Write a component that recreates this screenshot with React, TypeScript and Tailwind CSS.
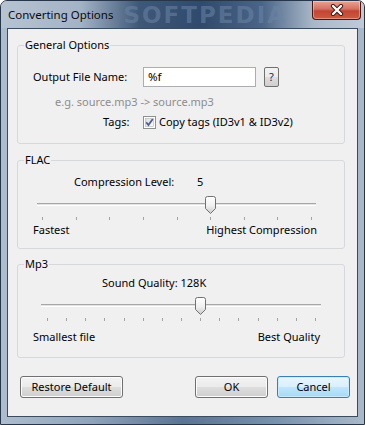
import React from 'react';

const btn =
  "h-[22px] w-[73px] rounded-[3px] border border-[#707070] bg-[linear-gradient(#f2f2f2_0%,#ebebeb_48%,#dddddd_52%,#cfcfcf_100%)] text-[11px] text-black shadow-[inset_0_0_0_1px_#fcfcfc]";

function Slider({ width, ticks, value, padL, padR, className }: { width: number; ticks: number; value: number; padL: number; padR: number; className: string }) {
  const step = (width - padL - padR - 1) / (ticks - 1);
  const left = padL + value * step - 5;
  return (
    <div className={className} style={{ width }}>
      <div className="relative h-[18px] flex items-center">
        <div className="w-full h-[3px] border-t border-[#a7a7a7] border-b border-b-white bg-[#e3e3e3] mt-[-2px]" />
        <svg className="absolute top-0" style={{ left }} width="11" height="18" viewBox="0 0 11 18">
          <defs>
            <linearGradient id={`th${ticks}`} x1="0" y1="0" x2="0" y2="1">
              <stop offset="0" stopColor="#ffffff" />
              <stop offset="0.55" stopColor="#f0f0f0" />
              <stop offset="1" stopColor="#c9c9c9" />
            </linearGradient>
          </defs>
          <path d="M0.5 2.5 Q0.5 0.5 2.5 0.5 H8.5 Q10.5 0.5 10.5 2.5 V12.5 L5.5 17.5 L0.5 12.5 Z" fill={`url(#th${ticks})`} stroke="#707070" />
        </svg>
      </div>
      <div className="flex justify-between mt-[3px]" style={{ paddingLeft: padL, paddingRight: padR }}>
        {Array.from({ length: ticks }).map((_, i) => (
          <div key={i} className="w-px h-[3px] bg-[#a3a3a3]" />
        ))}
      </div>
    </div>
  );
}

export default function App() {
  return (
    <div className="w-[365px] h-[425px] font-['Noto_Sans',sans-serif] text-black">
      <div className="w-full h-full flex flex-col rounded-t-[7px] border border-[#27364a] bg-[linear-gradient(90deg,#aebdcd_0%,#8fa3ba_25%,#5c7493_50%,#7790ab_75%,#aab9ca_100%)] overflow-hidden">
        {/* title bar */}
        <div className="h-[27px] flex items-start bg-[linear-gradient(90deg,#b6c3d1_0%,#a3b3c6_22%,#3e5878_38%,#2f4a6d_55%,#4a6587_72%,#a9b8c9_86%,#bfcad7_100%)]">
          <span className="shrink-0 whitespace-nowrap ml-[7px] mt-[7px] text-[11.5px] leading-[14px] text-[#0b0b0b]">Converting Options</span>
          <span className="shrink-0 whitespace-nowrap ml-[10px] mt-[1px] text-[23px] leading-[26px] font-bold tracking-[2px] text-[#6d86a6]/55 font-['DejaVu_Sans',sans-serif]">SOFTPEDIA</span>
          <div className="shrink-0 ml-auto mr-[3px] w-[49px] h-[19px] rounded-b-[4px] border border-t-0 border-[#4a1712] bg-[linear-gradient(#e9a493_0%,#d47062_45%,#c24534_55%,#cf5a3e_100%)] flex items-center justify-center shadow-[inset_0_0_0_1px_rgba(255,255,255,0.35)]">
            <svg width="14" height="12" viewBox="0 0 14 12">
              <path d="M3 2 L11 10 M11 2 L3 10" stroke="#3a1410" strokeWidth="4.2" strokeLinecap="round" />
              <path d="M3 2 L11 10 M11 2 L3 10" stroke="#ffffff" strokeWidth="2.4" strokeLinecap="round" />
            </svg>
          </div>
        </div>

        {/* client area */}
        <div className="mx-[6px] mb-[7px] flex-1 border border-[#3c4c60] bg-[#f0f0f0] flex flex-col text-[11px]">
          {/* General Options */}
          <fieldset className="ml-[9px] mt-[9px] w-[328px] h-[106px] border border-[#d5d9dd] rounded-[3px]">
            <legend className="ml-[6px] px-[1px] leading-[14px]">General Options</legend>
            <div className="mt-[15px] pl-[15px] flex items-center">
              <span className="w-[110px]">Output File Name:</span>
              <div className="w-[113px] h-[20px] border border-[#abadb3] bg-white pl-[4px] flex items-center text-[11.5px]">%f</div>
              <div className="ml-[8px] w-[15px] h-[20px] rounded-[2px] border border-[#707070] bg-[linear-gradient(#f2f2f2_0%,#ebebeb_48%,#dddddd_52%,#cfcfcf_100%)] flex items-center justify-center text-[#13245a]">?</div>
            </div>
            <div className="mt-[8px] pl-[37px] leading-[14px] text-[#8d8d8d]">e.g. source.mp3 -&gt; source.mp3</div>
            <div className="mt-[6px] pl-[85px] flex items-center leading-[14px]">
              <span className="w-[40px]">Tags:</span>
              <svg width="13" height="13" viewBox="0 0 13 13">
                <defs>
                  <linearGradient id="cb" x1="0" y1="0" x2="1" y2="1">
                    <stop offset="0" stopColor="#dcdcdc" />
                    <stop offset="1" stopColor="#fbfbfb" />
                  </linearGradient>
                </defs>
                <rect x="0.5" y="0.5" width="12" height="12" fill="#fff" stroke="#8e8f8f" />
                <rect x="2.5" y="2.5" width="8" height="8" fill="url(#cb)" stroke="#b4b4b4" strokeWidth="0.6" />
                <path d="M3.2 6.3 L5.4 9 L9.8 3" fill="none" stroke="#4b5d95" strokeWidth="1.8" />
              </svg>
              <span className="ml-[3px]">Copy tags (ID3v1 &amp; ID3v2)</span>
            </div>
          </fieldset>

          {/* FLAC */}
          <fieldset className="ml-[9px] mt-[9px] w-[328px] h-[96px] border border-[#d5d9dd] rounded-[3px]">
            <legend className="ml-[6px] px-[1px] leading-[14px]">FLAC</legend>
            <div className="mt-[8px] pl-[56px] flex leading-[14px]">
              <span className="w-[123px]">Compression Level:</span>
              <span>5</span>
            </div>
            <Slider className="mt-[7px] ml-[19px]" width={279} ticks={9} value={5} padL={5} padR={4} />
            <div className="mt-[3px] pl-[15px] pr-[27px] flex justify-between leading-[14px]">
              <span>Fastest</span>
              <span>Highest Compression</span>
            </div>
          </fieldset>

          {/* Mp3 */}
          <fieldset className="ml-[9px] mt-[8px] w-[328px] h-[101px] border border-[#d5d9dd] rounded-[3px]">
            <legend className="ml-[6px] px-[1px] leading-[14px]">Mp3</legend>
            <div className="mt-[5px] pl-[84px] leading-[14px]">Sound Quality: 128K</div>
            <Slider className="mt-[7px] ml-[23px]" width={280} ticks={15} value={8} padL={6} padR={5} />
            <div className="mt-[9px] pl-[15px] pr-[24px] flex justify-between leading-[14px]">
              <span>Smallest file</span>
              <span>Best Quality</span>
            </div>
          </fieldset>

          {/* buttons */}
          <div className="mt-[18px] ml-[12px] mr-[7px] flex justify-between">
            <button className={btn + " w-[103px]"}>Restore Default</button>
            <div className="flex gap-[9px]">
              <button className={btn}>OK</button>
              <button className="h-[22px] w-[73px] rounded-[3px] border border-[#3c7fb1] bg-[linear-gradient(#eaf6fd_0%,#d9f0fc_48%,#bee6fd_52%,#a7d9f5_100%)] text-[11px] text-black shadow-[inset_0_0_0_1px_#c7eaff]">Cancel</button>
            </div>
          </div>
        </div>
      </div>
    </div>
  );
}
